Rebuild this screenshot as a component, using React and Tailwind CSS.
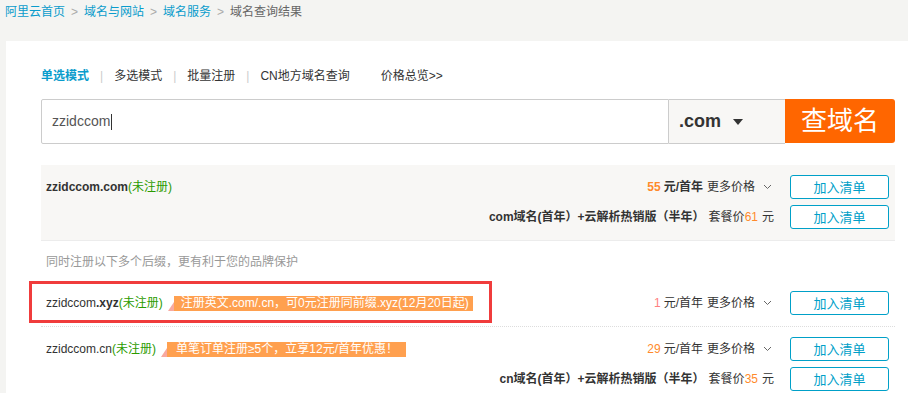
import React from 'react';

const FONT = { fontFamily: 'Arial, "Liberation Sans", "Noto Sans CJK SC", sans-serif' };

const AddButton = () => (
  <button className="ml-4 w-[99px] h-[24px] border border-[#00a0c8] rounded-[3px] text-[#00a0c8] text-[13px] leading-none bg-white">
    加入清单
  </button>
);

const Chevron = () => (
  <svg width="9" height="6" viewBox="0 0 9 6" className="ml-2 mr-[2px] inline-block">
    <path d="M1 1 L4.5 4.5 L8 1" fill="none" stroke="#666" strokeWidth="1" />
  </svg>
);

const Badge = ({ children, wide }) => (
  <span className="relative ml-[5px] inline-flex items-center h-[15px]">
    <span className="w-0 h-0 border-b-[9px] border-b-[#f8a9a0] border-l-[6px] border-l-transparent self-end" />
    <span className={`h-[15px] bg-[#ffa04f] text-white text-[12px] leading-[15px] ${wide ? 'pl-[7px] pr-[4px]' : 'pl-[9px] pr-[8px]'}`}>
      {children}
    </span>
  </span>
);

const PriceLine = ({ price, priceColor, bold }) => (
  <div className="flex items-center justify-end h-[24px]">
    <span className={`text-[12px] ${priceColor}`}>{price}</span>
    <span className={`ml-[3px] text-[12px] text-[#333] ${bold ? 'font-bold' : ''}`}>元/首年</span>
    <span className="ml-1 text-[12px] text-[#333]">更多价格</span>
    <Chevron />
    <AddButton />
  </div>
);

const PackageLine = ({ tld, price }) => (
  <div className="flex items-center justify-end h-[24px]">
    <span className="text-[12px] text-[#333] font-bold">{tld}域名(首年）+云解析热销版（半年）</span>
    <span className="ml-1 text-[12px] text-[#333]">套餐价</span>
    <span className="text-[12px] text-[#ff8a2b]">{price}</span>
    <span className="ml-1 text-[12px] text-[#333]">元</span>
    <AddButton />
  </div>
);

export default function App() {
  return (
    <div className="w-[908px] h-[393px] bg-[#f4f4f2] overflow-hidden" style={FONT}>
      {/* Breadcrumb */}
      <div className="h-[41px] pl-[5px] pt-[4px] text-[12px] flex items-start gap-[6px]">
        <span className="text-[#0a9ccc] leading-[17px]">阿里云首页</span>
        <span className="text-[#aaa] leading-[17px]">&gt;</span>
        <span className="text-[#0a9ccc] leading-[17px]">域名与网站</span>
        <span className="text-[#aaa] leading-[17px]">&gt;</span>
        <span className="text-[#0a9ccc] leading-[17px]">域名服务</span>
        <span className="text-[#aaa] leading-[17px]">&gt;</span>
        <span className="text-[#666] leading-[17px]">域名查询结果</span>
      </div>

      <div className="relative ml-[6px] bg-white h-[352px] pl-[35px] pr-[13px] pt-[26px]">
        {/* Tabs */}
        <div className="flex items-center h-[17px] text-[12px] text-[#333]">
          <span className="text-[#0a9ccc] font-bold">单选模式</span>
          <span className="mx-[11px] text-[#ccc]">|</span>
          <span>多选模式</span>
          <span className="mx-[11px] text-[#ccc]">|</span>
          <span>批量注册</span>
          <span className="mx-[11px] text-[#ccc]">|</span>
          <span>CN地方域名查询</span>
          <span className="ml-[31px]">价格总览&gt;&gt;</span>
        </div>

        {/* Search */}
        <div className="mt-[15px] flex h-[45px]">
          <div className="flex-1 flex items-center border border-[#ccc] rounded-l-[2px] pl-[10px] text-[14px] text-[#555]">
            zzidccom<span className="inline-block w-px h-[16px] bg-[#333] ml-px" />
          </div>
          <div className="w-[116px] flex items-center pl-[10px] bg-[#f8f7f5] border-y border-[#ccc] text-[18px] font-bold text-[#333]">
            .com
            <svg width="10" height="6" viewBox="0 0 10 6" className="ml-[12px]">
              <path d="M0 0 H10 L5 6 Z" fill="#333" />
            </svg>
          </div>
          <button className="w-[110px] h-[44px] bg-[#ff6600] text-white text-[26px] rounded-r-[3px] leading-none">
            查域名
          </button>
        </div>

        {/* .com row */}
        <div className="mt-[21px] bg-[#f8f7f5] border-b border-[#ececec] h-[76px] flex pl-[5px] pr-[6px] pt-[10px]">
          <div className="flex-1 h-[24px] flex items-center text-[12px]">
            <span className="text-[#333] font-bold">zzidccom.com</span>
            <span className="text-[#2b9b00]">(未注册)</span>
          </div>
          <div className="flex flex-col gap-[6px]">
            <PriceLine price={<b className="font-bold">55</b>} priceColor="text-[#ff8a2b]" bold />
            <PackageLine tld="com" price="61" />
          </div>
        </div>

        <div className="h-[41px] pl-[5px] flex items-center text-[12px] text-[#999]">
          同时注册以下多个后缀，更有利于您的品牌保护
        </div>

        {/* .xyz row */}
        <div className="h-[45px] border-b border-dotted border-[#ddd] flex items-start pl-[5px] pr-[6px] pt-[9px]">
          <div className="flex-1 h-[24px] flex items-center text-[12px]">
            <span className="text-[#333]">zzidccom</span>
            <span className="text-[#333] font-bold">.xyz</span>
            <span className="text-[#2b9b00]">(未注册)</span>
            <Badge wide>注册英文.com/.cn，可0元注册同前缀.xyz(12月20日起)</Badge>
          </div>
          <PriceLine price="1" priceColor="text-[#ff8080]" />
        </div>

        {/* .cn row */}
        <div className="flex pl-[5px] pr-[6px] pt-[10px]">
          <div className="flex-1 h-[24px] flex items-center text-[12px]">
            <span className="text-[#333]">zzidccom.cn</span>
            <span className="text-[#2b9b00]">(未注册)</span>
            <Badge>单笔订单注册≥5个，立享12元/首年优惠！</Badge>
          </div>
          <div className="flex flex-col gap-[6px]">
            <PriceLine price="29" priceColor="text-[#ff8a2b]" />
            <PackageLine tld="cn" price="35" />
          </div>
        </div>

        {/* annotation box */}
        <div className="absolute left-[23px] top-[240px] w-[463px] h-[42px] border-[3px] border-[#f03c3c] pointer-events-none" />
      </div>
    </div>
  );
}
